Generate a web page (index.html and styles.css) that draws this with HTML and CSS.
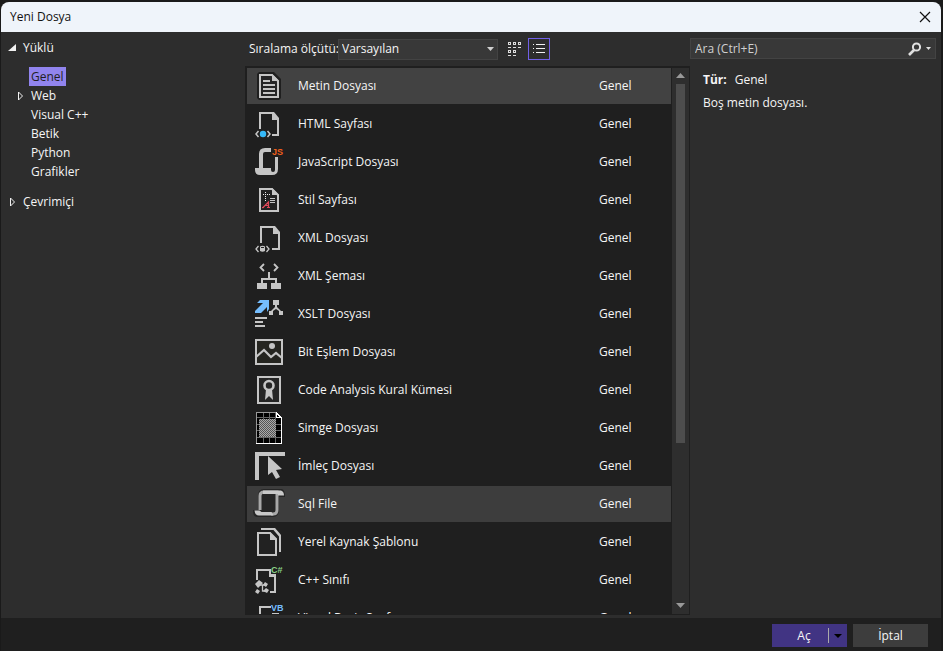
FILE: index.html
```
<!DOCTYPE html>
<html lang="tr">
<head>
<meta charset="utf-8">
<title>Yeni Dosya</title>
<link rel="stylesheet" href="styles.css">
</head>
<body>
<div class="dialog" role="dialog" aria-labelledby="title">
  <header class="titlebar">
    <h1 id="title">Yeni Dosya</h1>
    <button class="close" type="button" aria-label="Kapat"><svg width="12" height="12" viewBox="0 0 12 12"><path d="M1 1l10 10M11 1L1 11" fill="none" stroke="#111" stroke-width="1.2"/></svg></button>
  </header>
  <main class="content">
    <nav class="tree">
      <button class="node root" type="button"><svg class="arrow" width="8" height="8" viewBox="0 0 8 8"><path d="M8 0v7H0z" fill="#f1f1f1"/></svg>Yüklü</button>
      <ul class="branch">
        <li><button class="node" type="button"><span class="arrow"></span><span class="name current">Genel</span></button></li>
        <li><button class="node" type="button"><svg class="arrow" width="8" height="10" viewBox="0 0 8 10"><path d="M1.500 1v8l4-4z" fill="none" stroke="#f1f1f1"/></svg><span class="name">Web</span></button></li>
        <li><button class="node" type="button"><span class="arrow"></span><span class="name">Visual C++</span></button></li>
        <li><button class="node" type="button"><span class="arrow"></span><span class="name">Betik</span></button></li>
        <li><button class="node" type="button"><span class="arrow"></span><span class="name">Python</span></button></li>
        <li><button class="node" type="button"><span class="arrow"></span><span class="name">Grafikler</span></button></li>
      </ul>
      <button class="node root" type="button"><svg class="arrow" width="8" height="10" viewBox="0 0 8 10"><path d="M2.500 1v8l4-4z" fill="none" stroke="#f1f1f1"/></svg>Çevrimiçi</button>
    </nav>

    <section class="templates">
      <div class="toolbar">
        <label for="sort">Sıralama ölçütü:</label>
        <div class="picker">
          <select id="sort"><option>Varsayılan</option></select>
          <svg class="caret" width="7" height="4" viewBox="0 0 7 4"><path d="M0 0h7L3.500 4z" fill="#d0d0d0"/></svg>
        </div>
        <button class="view" type="button" aria-label="Küçük simgeler"><svg width="14" height="16" viewBox="0 0 14 16" shape-rendering="crispEdges"><path d="M1.500 1.500h2v2h-2zM6.500 1.500h2v2h-2zM11.500 1.500h2v2h-2zM1.500 9.500h2v2h-2zM6.500 9.500h2v2h-2z" fill="none" stroke="#ddd"/><path d="M1 6h3v1H1zM6 6h3v1H6zM11 6h3v1h-3zM1 14h3v1H1zM6 14h3v1H6z" fill="#ddd"/></svg></button>
        <button class="view on" type="button" aria-label="Liste"><svg width="12" height="12" viewBox="0 0 12 12" shape-rendering="crispEdges"><path d="M0 1h1v1H0zM3 1h9v1H3zM0 5h1v1H0zM3 5h9v1H3zM0 9h1v1H0zM3 9h9v1H3z" fill="#f1f1f1"/></svg></button>
      </div>
      <div class="listframe">
        <ul class="list">
          <li class="item selected"><svg class="icon" viewBox="0 0 32 32"><path d="M6 2h15l7 7v19l-2 2H6l-2-2V4z" fill="#1f1f1f"/><path d="M7 5h12l6 6v16H7z" fill="#252526" stroke="#c5c5c5" stroke-width="2"/><path d="M19 4l7 7h-7z" fill="#c5c5c5"/><path d="M10 11h7M10 15h12M10 19h12M10 23h12" stroke="#c5c5c5" stroke-width="2"/></svg><span class="label">Metin Dosyası</span><span class="kind">Genel</span></li>
          <li class="item"><svg class="icon" viewBox="0 0 32 32"><path d="M7 21V5h13M25 11v16h-6" fill="none" stroke="#c5c5c5" stroke-width="2"/><path d="M19 4h2l5 6v2h-7z" fill="#c5c5c5"/><path d="M5.500 23L3 26l2.500 3M14.500 23l2.500 3-2.500 3" fill="none" stroke="#c5c5c5" stroke-width="1.500"/><circle cx="10" cy="26" r="3.200" fill="#35b8f8"/></svg><span class="label">HTML Sayfası</span><span class="kind">Genel</span></li>
          <li class="item"><svg class="icon" viewBox="0 0 32 32"><path d="M18 2h-6Q6 2 6 8v14H2v2q0 5 5 5h12q6 0 6-6V11h-3v13q0 2-2 2t-2-2v-2h-8V8q0-2 2-2h6z" fill="#c5c5c5"/><text class="tag" x="19" y="9" fill="#f2601c">JS</text></svg><span class="label">JavaScript Dosyası</span><span class="kind">Genel</span></li>
          <li class="item"><svg class="icon" viewBox="0 0 32 32"><path d="M7 5h12l6 6v16H7z" fill="#222" stroke="#c5c5c5" stroke-width="2"/><path d="M19 4l7 7h-7z" fill="#c5c5c5"/><path d="M10 10.500h7M12.500 8v10" stroke="#eee" stroke-dasharray="1 1"/><path d="M17 14.500h5M17 16.500h5M17 18.500h5" stroke="#c5c5c5"/><path d="M9.500 24l6-6v6M9 23.500h2M14 23.500h3M12 21.500h4" fill="none" stroke="#e04858" stroke-width="1.200"/></svg><span class="label">Stil Sayfası</span><span class="kind">Genel</span></li>
          <li class="item"><svg class="icon" viewBox="0 0 32 32"><path d="M8 21V5h13M26 11v16h-7" fill="none" stroke="#c5c5c5" stroke-width="2"/><path d="M20 4h2l5 6v2h-7z" fill="#c5c5c5"/><path d="M5.500 24L3 27l2.500 3M13.500 24l2.500 3-2.500 3" fill="none" stroke="#c5c5c5" stroke-width="1.300"/><path d="M7 24.500q2.500-1.500 5 0v4.500q-2.500 1.500-5 0z" fill="#c5c5c5"/><path d="M8 25.500h3" stroke="#222"/></svg><span class="label">XML Dosyası</span><span class="kind">Genel</span></li>
          <li class="item"><svg class="icon" viewBox="0 0 32 32"><path d="M11 4L7.500 7.500 11 11M21 4l3.500 3.500L21 11" fill="none" stroke="#c5c5c5" stroke-width="1.800"/><path d="M15 12h2v6h7v5h4v6H18v-6h4v-3H10v3h4v6H4v-6h4v-5h7z" fill="#c5c5c5"/></svg><span class="label">XML Şeması</span><span class="kind">Genel</span></li>
          <li class="item"><svg class="icon" viewBox="0 0 32 32"><path d="M7 2h9v9l-2 3V9l-6 6H2v-2l8-8H4z" fill="#75beff"/><path d="M20 2h6v5h-2v2l4 4h2v4h-4v-4l-3-2-3 2v4h-4v-4h2l4-4V7h-2zM2 19h12v2H2zM2 23h8v2H2zM2 27h10v2H2z" fill="#c5c5c5"/></svg><span class="label">XSLT Dosyası</span><span class="kind">Genel</span></li>
          <li class="item"><svg class="icon" viewBox="0 0 32 32"><path d="M3 4h26v24H3z" fill="#252520" stroke="#c5c5c5" stroke-width="2"/><circle cx="19" cy="10" r="3" fill="#c5c5c5"/><path d="M3 21l8-7 7 7 5-4 6 5" fill="none" stroke="#c5c5c5" stroke-width="2.200"/></svg><span class="label">Bit Eşlem Dosyası</span><span class="kind">Genel</span></li>
          <li class="item"><svg class="icon" viewBox="0 0 32 32"><path d="M5 3h22v26H5z" fill="#252525" stroke="#c5c5c5" stroke-width="2"/><circle cx="16" cy="11.500" r="4.500" fill="none" stroke="#c5c5c5" stroke-width="2.600"/><path d="M13 15h6l1 11-4-4-4 4z" fill="#c5c5c5"/></svg><span class="label">Code Analysis Kural Kümesi</span><span class="kind">Genel</span></li>
          <li class="item"><svg class="icon" viewBox="0 0 32 32" shape-rendering="crispEdges"><defs><pattern id="dither" width="2" height="2" patternUnits="userSpaceOnUse"><path d="M0 0h2v2H0z" fill="#555"/><path d="M0 0h1v1H0zM1 1h1v1H1z" fill="#aaa"/></pattern></defs><path d="M3 0h20l6 6v26H3z" fill="#000"/><path d="M3 5.500h20M3 12.500h25M3 18.500h25M3 25.500h25M10.500 0v31M16.500 0v31M22.500 0v31" stroke="#666"/><path d="M6 7h17v18H6z" fill="url(#dither)"/><path d="M3.500 31V.5h20" fill="none" stroke="#999"/><path d="M23.500 0v5.500h5M23 .5l5.500 5.500v25.500H3" fill="none" stroke="#fff"/></svg><span class="label">Simge Dosyası</span><span class="kind">Genel</span></li>
          <li class="item"><svg class="icon" viewBox="0 0 32 32"><path d="M2 2h30v4H6v24H2zM15 6l14 13-6 1 4 7-4 2-4-7-4 3z" fill="#c5c5c5"/></svg><span class="label">İmleç Dosyası</span><span class="kind">Genel</span></li>
          <li class="item hover"><svg class="icon" viewBox="0 0 32 32"><path d="M11 1h18q3 1 3 8h-6v13q0 7-6 7H4q-4 0-4-7h5V8q0-7 6-7z" fill="#262626"/><path d="M7 22V8q0-4 4-4h13v18q0 4-4 4h-2" fill="none" stroke="#a8a8a8" stroke-width="3"/><path d="M10 2.500h18q3 1 3 5h-6V6H10zM1.500 22.500h5l2 1.500h10l2 3.500H6q-4 0-4.500-5z" fill="#c8c8c8"/></svg><span class="label">Sql File</span><span class="kind">Genel</span></li>
          <li class="item"><svg class="icon" viewBox="0 0 32 32"><path d="M5 7h12l6 6v16H5z" fill="#222" stroke="#c5c5c5" stroke-width="2"/><path d="M17 6l7 8h-7z" fill="#c5c5c5"/><path d="M8 3h13l6 7v16" fill="none" stroke="#c5c5c5" stroke-width="2"/><path d="M20 2h2l6 7v3z" fill="#c5c5c5"/></svg><span class="label">Yerel Kaynak Şablonu</span><span class="kind">Genel</span></li>
          <li class="item"><svg class="icon" viewBox="0 0 32 32"><path d="M4 16V6h13M22 12v16h-5" fill="none" stroke="#c5c5c5" stroke-width="2"/><path d="M16 5h2v5h5v3h-7z" fill="#c5c5c5"/><path d="M6 16l4 3-5 5-3-4zM12 18l3 2-2 3-3-2zM13 24l3 2-2 3-4-2zM4 25l3 2-2 3-3-2z" fill="#c5c5c5"/><path d="M7 21h7M9.500 21v6h4" fill="none" stroke="#c5c5c5" stroke-width="1.300"/><text class="tag" x="18" y="9" fill="#89d185">C#</text></svg><span class="label">C++ Sınıfı</span><span class="kind">Genel</span></li>
          <li class="item"><svg class="icon" viewBox="0 0 32 32"><path d="M7 28V5h11M25 11v16H7" fill="none" stroke="#c5c5c5" stroke-width="2"/><path d="M19 11h7v3h-7z" fill="#c5c5c5"/><text class="tag" x="18" y="9" fill="#75beff">VB</text></svg><span class="label">Visual Basic Sınıfı</span><span class="kind">Genel</span></li>
        </ul>
        <div class="scrollbar">
          <svg width="9" height="5" viewBox="0 0 9 5"><path d="M0 5h9L4.500 0z" fill="#999"/></svg>
          <div class="track"><div class="thumb"></div></div>
          <svg width="9" height="5" viewBox="0 0 9 5"><path d="M0 0h9L4.500 5z" fill="#999"/></svg>
        </div>
      </div>
    </section>

    <aside class="details">
      <div class="search">
        <input type="text" placeholder="Ara (Ctrl+E)" aria-label="Ara">
        <svg width="14" height="14" viewBox="0 0 14 14"><circle cx="8.500" cy="5" r="3.600" fill="none" stroke="#e0e0e0" stroke-width="2"/><path d="M6 8l-5 5" stroke="#e0e0e0" stroke-width="2.600"/></svg>
        <svg width="5" height="3" viewBox="0 0 5 3"><path d="M0 0h5L2.500 3z" fill="#e0e0e0"/></svg>
      </div>
      <p class="type"><b>Tür:</b><span>Genel</span></p>
      <p>Boş metin dosyası.</p>
    </aside>
  </main>
  <footer class="actions">
    <div class="split">
      <button class="open" type="button">Aç</button>
      <button class="more" type="button" aria-label="Birlikte aç"><svg width="8" height="4" viewBox="0 0 8 4"><path d="M0 0h8L4 4z" fill="#000"/></svg></button>
    </div>
    <button class="cancel" type="button">İptal</button>
  </footer>
</div>
</body>
</html>
```
FILE: styles.css
```
* {
  box-sizing: border-box;
}

body {
  margin: 0;
  height: 100vh;
  padding: 2px 2px 0 1px;
  background: #1a1a1a;
  color: #f5f5f5;
  font: 12px/18px "Open Sans", "Noto Sans", sans-serif;
  overflow: hidden;
}

button,
input,
select {
  margin: 0;
  padding: 0;
  border: 0;
  border-radius: 0;
  background: none;
  color: inherit;
  font: inherit;
}

svg {
  display: block;
  flex: none;
}

ul {
  margin: 0;
  padding: 0;
  list-style: none;
}

p {
  margin: 0;
}

.dialog {
  display: flex;
  flex-direction: column;
  height: 100%;
  border-radius: 8px 8px 0 0;
  background: #2d2d2d;
  overflow: hidden;
}

.titlebar {
  display: flex;
  align-items: center;
  justify-content: space-between;
  height: 30px;
  padding: 0 10px 0 9px;
  background: #eff4fa;
  color: #111;
}

.titlebar h1 {
  margin: 0;
  font-size: 12px;
  font-weight: 400;
}

.content {
  display: grid;
  grid-template-columns: 244px minmax(0, 1fr) 251px;
  flex: 1;
  min-height: 0;
}

.tree {
  padding: 6px 0 0 7px;
}

.node {
  display: flex;
  align-items: center;
  height: 19px;
}

.root {
  gap: 7px;
}

.arrow {
  width: 8px;
}

.branch {
  padding: 10px 0 11px 9px;
}

.branch .node {
  gap: 4px;
}

.name {
  padding: 0 2px;
  line-height: 19px;
}

.current {
  background: #9184ee;
  color: #1f1f1f;
}

.templates {
  display: flex;
  flex-direction: column;
  min-height: 0;
  padding-bottom: 3px;
}

.toolbar {
  display: flex;
  align-items: center;
  height: 34px;
  padding-left: 4px;
}

.toolbar label {
  width: 89px;
  white-space: nowrap;
}

.picker {
  display: grid;
  align-items: center;
  width: 160px;
  margin-right: 5px;
}

.picker select {
  grid-area: 1 / 1;
  height: 21px;
  padding: 0 3px;
  border: 1px solid #434343;
  background: #383838;
  appearance: none;
}

.caret {
  grid-area: 1 / 1;
  justify-self: end;
  margin-right: 4px;
  pointer-events: none;
}

.view {
  display: grid;
  place-items: center;
  width: 22px;
  height: 22px;
  margin-right: 3px;
}

.on {
  border: 1px solid #7160e8;
}

.listframe {
  display: flex;
  flex: 1;
  min-height: 0;
  gap: 1px;
  padding: 2px 1px 1px 2px;
  background: #1f1f1f;
}

.list {
  display: flex;
  flex: 1;
  flex-direction: column;
  gap: 2px;
  overflow: hidden;
}

.item {
  display: flex;
  flex: none;
  align-items: center;
  height: 36px;
  padding-left: 6px;
}

.selected {
  background: #424242;
}

.hover {
  background: #3d3d3d;
}

.icon {
  width: 32px;
  height: 32px;
}

.tag {
  font: bold 9px "Liberation Sans", sans-serif;
}

.label {
  flex: 1;
  padding-left: 13px;
}

.kind {
  width: 72px;
}

.scrollbar {
  display: flex;
  flex-direction: column;
  align-items: center;
  width: 17px;
  padding: 5px 0 6px;
  background: #2e2e2e;
}

.track {
  flex: 1;
  width: 9px;
  padding: 6px 0;
}

.thumb {
  height: 70%;
  background: #4d4d4d;
}

.details {
  padding: 6px 5px 0 0;
}

.search {
  display: flex;
  align-items: center;
  gap: 4px;
  height: 21px;
  padding: 0 4px;
  margin-bottom: 12px;
  border: 1px solid #434343;
  background: #383838;
}

.search input {
  flex: 1;
  min-width: 0;
  outline: 0;
}

.search input::placeholder {
  color: #d0d0d0;
  opacity: 1;
}

.details p {
  padding-left: 13px;
}

.details .type {
  display: flex;
  gap: 8px;
  margin-bottom: 5px;
}

.actions {
  display: flex;
  align-items: center;
  justify-content: flex-end;
  gap: 6px;
  height: 33px;
  padding: 0 13px 0 0;
  background: #1f1f1f;
}

.split,
.cancel {
  display: flex;
  align-items: center;
  justify-content: center;
  width: 75px;
  height: 23px;
  margin-top: 2px;
}

.split {
  background: #413483;
}

.open {
  flex: 1;
  padding-left: 8px;
}

.more {
  display: grid;
  place-items: center;
  width: 19px;
  height: 15px;
  border-left: 1px solid #aaa;
}

.cancel {
  background: #3d3d3d;
}
```
